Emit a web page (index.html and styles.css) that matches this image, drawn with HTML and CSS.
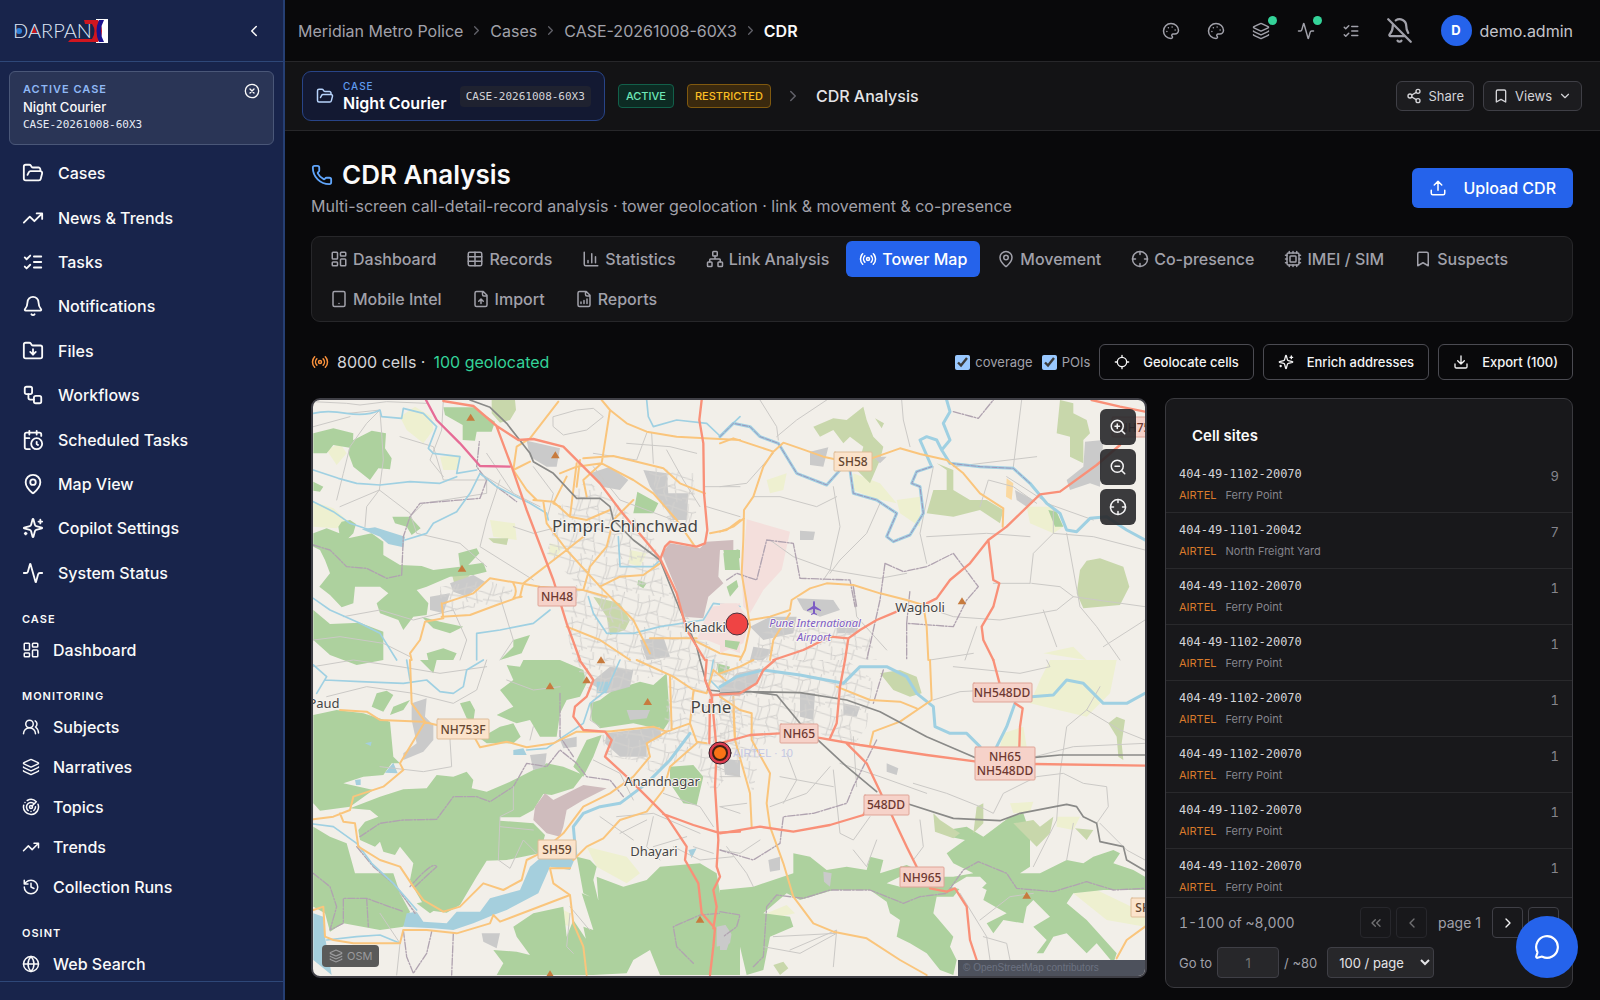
FILE: index.html
```html
<!DOCTYPE html>
<html lang="en">
<head>
<meta charset="utf-8">
<meta name="viewport" content="width=device-width, initial-scale=1">
<title>CDR Analysis</title>
<link rel="stylesheet" href="styles.css">
</head>
<body>
<svg class="sprite" aria-hidden="true">
  <symbol id="folder" viewBox="0 0 24 24"><path d="m6 14 1.5-2.9A2 2 0 0 1 9.24 10H20a2 2 0 0 1 1.94 2.5l-1.54 6a2 2 0 0 1-1.95 1.5H4a2 2 0 0 1-2-2V5a2 2 0 0 1 2-2h3.9a2 2 0 0 1 1.69.9l.81 1.2a2 2 0 0 0 1.67.9H18a2 2 0 0 1 2 2v2"/></symbol>
  <symbol id="trend" viewBox="0 0 24 24"><path d="m22 7-8.5 8.5-5-5L2 17M16 7h6v6"/></symbol>
  <symbol id="checks" viewBox="0 0 24 24"><path d="m3 17 2 2 4-4M3 7l2 2 4-4M13 6h8M13 12h8M13 18h8"/></symbol>
  <symbol id="bell" viewBox="0 0 24 24"><path d="M10.27 21a2 2 0 0 0 3.46 0M3.26 15.33A1 1 0 0 0 4 17h16a1 1 0 0 0 .74-1.67C19.41 13.96 18 12.5 18 8A6 6 0 0 0 6 8c0 4.5-1.41 5.96-2.74 7.33"/></symbol>
  <symbol id="belloff" viewBox="0 0 24 24"><path d="M10.27 21a2 2 0 0 0 3.46 0M17 17H4a1 1 0 0 1-.74-1.67C4.59 13.96 6 12.5 6 8a6 6 0 0 1 .26-1.74M2 2l20 20M8.67 3A6 6 0 0 1 18 8c0 2.69.77 4.65 1.71 6.05"/></symbol>
  <symbol id="folderdown" viewBox="0 0 24 24"><path d="M20 20a2 2 0 0 0 2-2V8a2 2 0 0 0-2-2h-7.9a2 2 0 0 1-1.69-.9L9.6 3.9A2 2 0 0 0 7.93 3H4a2 2 0 0 0-2 2v13a2 2 0 0 0 2 2ZM12 10v6M15 13l-3 3-3-3"/></symbol>
  <symbol id="flow" viewBox="0 0 24 24"><rect width="8" height="8" x="3" y="3" rx="2"/><path d="M7 11v4a2 2 0 0 0 2 2h4"/><rect width="8" height="8" x="13" y="13" rx="2"/></symbol>
  <symbol id="calclock" viewBox="0 0 24 24"><path d="M21 7.5V6a2 2 0 0 0-2-2H5a2 2 0 0 0-2 2v14a2 2 0 0 0 2 2h3.5M16 2v4M8 2v4M3 10h5M17.5 17.5 16 16.3V14"/><circle cx="16" cy="16" r="6"/></symbol>
  <symbol id="pin" viewBox="0 0 24 24"><path d="M20 10c0 5-5.54 10.19-7.4 11.8a1 1 0 0 1-1.2 0C9.54 20.19 4 15 4 10a8 8 0 0 1 16 0"/><circle cx="12" cy="10" r="3"/></symbol>
  <symbol id="sparkles" viewBox="0 0 24 24"><path d="M9.94 15.5A2 2 0 0 0 8.5 14.06l-6.14-1.58a.5.5 0 0 1 0-.96L8.5 9.94A2 2 0 0 0 9.94 8.5l1.58-6.14a.5.5 0 0 1 .96 0l1.58 6.14a2 2 0 0 0 1.44 1.44l6.14 1.58a.5.5 0 0 1 0 .96l-6.14 1.58a2 2 0 0 0-1.44 1.44l-1.58 6.14a.5.5 0 0 1-.96 0ZM20 3v4M22 5h-4M4 17v2M5 18H3"/></symbol>
  <symbol id="activity" viewBox="0 0 24 24"><path d="M22 12h-2.48a2 2 0 0 0-1.93 1.46l-2.35 8.36a.25.25 0 0 1-.48 0L9.24 2.18a.25.25 0 0 0-.48 0l-2.35 8.36A2 2 0 0 1 4.49 12H2"/></symbol>
  <symbol id="dash" viewBox="0 0 24 24"><rect width="7" height="9" x="3" y="3" rx="1"/><rect width="7" height="5" x="14" y="3" rx="1"/><rect width="7" height="9" x="14" y="12" rx="1"/><rect width="7" height="5" x="3" y="16" rx="1"/></symbol>
  <symbol id="users" viewBox="0 0 24 24"><path d="M18 21a8 8 0 0 0-16 0"/><circle cx="10" cy="8" r="5"/><path d="M22 20c0-3.37-2-6.5-4-8a5 5 0 0 0-.45-8.3"/></symbol>
  <symbol id="layers" viewBox="0 0 24 24"><path d="M12.83 2.18a2 2 0 0 0-1.66 0L2.6 6.08a1 1 0 0 0 0 1.83l8.58 3.91a2 2 0 0 0 1.66 0l8.58-3.9a1 1 0 0 0 0-1.83zM2 12a1 1 0 0 0 .58.91l8.6 3.91a2 2 0 0 0 1.65 0l8.58-3.9A1 1 0 0 0 22 12M2 17a1 1 0 0 0 .58.91l8.6 3.91a2 2 0 0 0 1.65 0l8.58-3.9A1 1 0 0 0 22 17"/></symbol>
  <symbol id="radar" viewBox="0 0 24 24"><path d="M19.07 4.93A10 10 0 0 0 6.99 3.34M4 6h.01M2.29 9.62A10 10 0 1 0 21.31 8.35M16.24 7.76A6 6 0 1 0 8.23 16.67M12 18h.01M17.99 11.66A6 6 0 0 1 15.77 16.67M13.41 10.59l5.66-5.66"/><circle cx="12" cy="12" r="2"/></symbol>
  <symbol id="history" viewBox="0 0 24 24"><path d="M3 12a9 9 0 1 0 9-9 9.75 9.75 0 0 0-6.74 2.74L3 8M3 3v5h5M12 7v5l4 2"/></symbol>
  <symbol id="globe" viewBox="0 0 24 24"><circle cx="12" cy="12" r="10"/><path d="M12 2a14.5 14.5 0 0 0 0 20 14.5 14.5 0 0 0 0-20M2 12h20"/></symbol>
  <symbol id="left" viewBox="0 0 24 24"><path d="m15 18-6-6 6-6"/></symbol>
  <symbol id="right" viewBox="0 0 24 24"><path d="m9 18 6-6-6-6"/></symbol>
  <symbol id="down" viewBox="0 0 24 24"><path d="m6 9 6 6 6-6"/></symbol>
  <symbol id="first" viewBox="0 0 24 24"><path d="m11 17-5-5 5-5M18 17l-5-5 5-5"/></symbol>
  <symbol id="last" viewBox="0 0 24 24"><path d="m6 17 5-5-5-5M13 17l5-5-5-5"/></symbol>
  <symbol id="xcircle" viewBox="0 0 24 24"><circle cx="12" cy="12" r="10"/><path d="m15 9-6 6M9 9l6 6"/></symbol>
  <symbol id="palette" viewBox="0 0 24 24"><path d="M12 22a1 1 0 0 1 0-20 10 9 0 0 1 10 9 5 5 0 0 1-5 5h-2.25a1.75 1.75 0 0 0-1.4 2.8l.3.4a1.75 1.75 0 0 1-1.4 2.8z"/><path d="M13.5 6.5h.01M17.5 10.5h.01M6.5 12.5h.01M8.5 7.5h.01"/></symbol>
  <symbol id="share" viewBox="0 0 24 24"><circle cx="18" cy="5" r="3"/><circle cx="6" cy="12" r="3"/><circle cx="18" cy="19" r="3"/><path d="m8.59 13.51 6.83 3.98M15.41 6.51l-6.82 3.98"/></symbol>
  <symbol id="bookmark" viewBox="0 0 24 24"><path d="m19 21-7-4-7 4V5a2 2 0 0 1 2-2h10a2 2 0 0 1 2 2z"/></symbol>
  <symbol id="phone" viewBox="0 0 24 24"><path d="M13.83 16.57a1 1 0 0 0 1.21-.3l.36-.47A2 2 0 0 1 17 15h3a2 2 0 0 1 2 2v3a2 2 0 0 1-2 2A18 18 0 0 1 2 4a2 2 0 0 1 2-2h3a2 2 0 0 1 2 2v3a2 2 0 0 1-.8 1.6l-.47.35a1 1 0 0 0-.29 1.23 14 14 0 0 0 6.39 6.39"/></symbol>
  <symbol id="upload" viewBox="0 0 24 24"><path d="M21 15v4a2 2 0 0 1-2 2H5a2 2 0 0 1-2-2v-4M17 8l-5-5-5 5M12 3v12"/></symbol>
  <symbol id="download" viewBox="0 0 24 24"><path d="M21 15v4a2 2 0 0 1-2 2H5a2 2 0 0 1-2-2v-4M7 10l5 5 5-5M12 15V3"/></symbol>
  <symbol id="table" viewBox="0 0 24 24"><rect width="18" height="18" x="3" y="3" rx="2"/><path d="M3 9h18M3 15h18M12 3v18"/></symbol>
  <symbol id="chart" viewBox="0 0 24 24"><path d="M3 3v16a2 2 0 0 0 2 2h16M18 17V9M13 17V5M8 17v-3"/></symbol>
  <symbol id="network" viewBox="0 0 24 24"><rect x="16" y="16" width="6" height="6" rx="1"/><rect x="2" y="16" width="6" height="6" rx="1"/><rect x="9" y="2" width="6" height="6" rx="1"/><path d="M5 16v-3a1 1 0 0 1 1-1h12a1 1 0 0 1 1 1v3M12 12V8"/></symbol>
  <symbol id="radio" viewBox="0 0 24 24"><path d="M4.9 19.1C1 15.2 1 8.8 4.9 4.9M7.8 16.2c-2.3-2.3-2.3-6.1 0-8.5M16.2 7.8c2.3 2.3 2.3 6.1 0 8.5M19.1 4.9C23 8.8 23 15.1 19.1 19"/><circle cx="12" cy="12" r="2"/></symbol>
  <symbol id="crosshair" viewBox="0 0 24 24"><circle cx="12" cy="12" r="10"/><path d="M22 12h-4M6 12H2M12 6V2M12 22v-4"/></symbol>
  <symbol id="locate" viewBox="0 0 24 24"><path d="M2 12h3M19 12h3M12 2v3M12 19v3"/><circle cx="12" cy="12" r="7"/></symbol>
  <symbol id="cpu" viewBox="0 0 24 24"><rect x="4" y="4" width="16" height="16" rx="2"/><rect x="8" y="8" width="8" height="8" rx="1"/><path d="M12 20v2M12 2v2M17 20v2M17 2v2M2 12h2M2 17h2M2 7h2M20 12h2M20 17h2M20 7h2M7 20v2M7 2v2"/></symbol>
  <symbol id="mobile" viewBox="0 0 24 24"><rect width="16" height="20" x="4" y="2" rx="2"/><path d="M12 18h.01"/></symbol>
  <symbol id="fileup" viewBox="0 0 24 24"><path d="M15 2H6a2 2 0 0 0-2 2v16a2 2 0 0 0 2 2h12a2 2 0 0 0 2-2V7ZM14 2v4a2 2 0 0 0 2 2h4M12 12v6M15 15l-3-3-3 3"/></symbol>
  <symbol id="filechart" viewBox="0 0 24 24"><path d="M15 2H6a2 2 0 0 0-2 2v16a2 2 0 0 0 2 2h12a2 2 0 0 0 2-2V7ZM14 2v4a2 2 0 0 0 2 2h4M8 18v-2M12 18v-4M16 18v-6"/></symbol>
  <symbol id="zoomin" viewBox="0 0 24 24"><circle cx="11" cy="11" r="8"/><path d="m21 21-4.35-4.35M11 8v6M8 11h6"/></symbol>
  <symbol id="zoomout" viewBox="0 0 24 24"><circle cx="11" cy="11" r="8"/><path d="m21 21-4.35-4.35M8 11h6"/></symbol>
  <symbol id="chat" viewBox="0 0 24 24"><path d="M2.99 16.34a2 2 0 0 1 .1 1.17l-1.07 3.29a1 1 0 0 0 1.24 1.17l3.41-1a2 2 0 0 1 1.1.09 10 10 0 1 0-4.78-4.72"/></symbol>
</svg>

<div class="app">
  <aside class="sidebar">
    <div class="brand">
      <svg class="logo" viewBox="0 0 97 26" role="img" aria-label="DARPAN X">
        <rect x="83" y="1" width="12" height="24" fill="#fff"/>
        <path d="M71 2h14q8 11 0 22H55q2-3 4-3h20q5-8 0-15h-7Z" fill="#d0161f"/>
        <path d="M86 2h5q-6 11 0 22h-5q-5-11 0-22Z" fill="#1b128c"/>
        <circle cx="6" cy="13" r="3" fill="#2d7fd6"/>
        <path d="m21 8 3 7h-6Z" fill="#c8141e"/>
        <text x="0" y="20" class="logo-text">DARPAN</text>
      </svg>
      <button class="plain" aria-label="Collapse sidebar"><svg class="i18"><use href="#left"/></svg></button>
    </div>
    <div class="active-case">
      <div>
        <div class="ac-label">ACTIVE CASE</div>
        <div class="ac-name">Night Courier</div>
        <div class="ac-id">CASE-20261008-60X3</div>
      </div>
      <button class="plain" aria-label="Close case"><svg class="i16"><use href="#xcircle"/></svg></button>
    </div>
    <nav class="nav-scroll">
      <div class="nav-main">
        <a href="#"><svg><use href="#folder"/></svg>Cases</a>
        <a href="#"><svg><use href="#trend"/></svg>News &amp; Trends</a>
        <a href="#"><svg><use href="#checks"/></svg>Tasks</a>
        <a href="#"><svg><use href="#bell"/></svg>Notifications</a>
        <a href="#"><svg><use href="#folderdown"/></svg>Files</a>
        <a href="#"><svg><use href="#flow"/></svg>Workflows</a>
        <a href="#"><svg><use href="#calclock"/></svg>Scheduled Tasks</a>
        <a href="#"><svg><use href="#pin"/></svg>Map View</a>
        <a href="#"><svg><use href="#sparkles"/></svg>Copilot Settings</a>
        <a href="#"><svg><use href="#activity"/></svg>System Status</a>
      </div>
      <div class="nav-group"><h2>CASE</h2>
        <a href="#"><svg><use href="#dash"/></svg>Dashboard</a>
      </div>
      <div class="nav-group"><h2>MONITORING</h2>
        <a href="#"><svg><use href="#users"/></svg>Subjects</a>
        <a href="#"><svg><use href="#layers"/></svg>Narratives</a>
        <a href="#"><svg><use href="#radar"/></svg>Topics</a>
        <a href="#"><svg><use href="#trend"/></svg>Trends</a>
        <a href="#"><svg><use href="#history"/></svg>Collection Runs</a>
      </div>
      <div class="nav-group"><h2>OSINT</h2>
        <a href="#"><svg><use href="#globe"/></svg>Web Search</a>
      </div>
    </nav>
    <div class="side-foot"></div>
  </aside>

  <div class="page">
    <header class="topbar">
      <nav class="crumbs" aria-label="Breadcrumb">
        <a href="#">Meridian Metro Police</a><svg><use href="#right"/></svg>
        <a href="#">Cases</a><svg><use href="#right"/></svg>
        <a href="#">CASE-20261008-60X3</a><svg><use href="#right"/></svg>
        <b>CDR</b>
      </nav>
      <div class="tools">
        <button class="plain tool" aria-label="Theme"><svg><use href="#palette"/></svg></button>
        <button class="plain tool" aria-label="Accent"><svg><use href="#palette"/></svg></button>
        <button class="plain tool" aria-label="Queue"><svg><use href="#layers"/></svg><span class="dot"></span></button>
        <button class="plain tool" aria-label="Health"><svg><use href="#activity"/></svg><span class="dot"></span></button>
        <button class="plain tool" aria-label="Tasks"><svg><use href="#checks"/></svg></button>
        <button class="plain mute" aria-label="Notifications off"><svg><use href="#belloff"/></svg></button>
        <button class="plain user"><span class="avatar">D</span>demo.admin</button>
      </div>
    </header>

    <div class="casebar">
      <div class="case-chip">
        <svg class="i18"><use href="#folder"/></svg>
        <div><div class="cc-label">CASE</div><div class="cc-name">Night Courier</div></div>
        <code>CASE-20261008-60X3</code>
      </div>
      <span class="badge green">ACTIVE</span>
      <span class="badge amber">RESTRICTED</span>
      <svg class="i18 sep"><use href="#right"/></svg>
      <span class="here">CDR Analysis</span>
      <div class="case-actions">
        <button class="small"><svg><use href="#share"/></svg>Share</button>
        <button class="small"><svg><use href="#bookmark"/></svg>Views<svg class="caret"><use href="#down"/></svg></button>
      </div>
    </div>

    <main>
      <div class="title-row">
        <div>
          <h1><svg><use href="#phone"/></svg>CDR Analysis</h1>
          <p>Multi-screen call-detail-record analysis · tower geolocation · link &amp; movement &amp; co-presence</p>
        </div>
        <button class="primary"><svg><use href="#upload"/></svg>Upload CDR</button>
      </div>

      <div class="tabs">
        <button><svg><use href="#dash"/></svg>Dashboard</button>
        <button><svg><use href="#table"/></svg>Records</button>
        <button><svg><use href="#chart"/></svg>Statistics</button>
        <button><svg><use href="#network"/></svg>Link Analysis</button>
        <button class="on"><svg><use href="#radio"/></svg>Tower Map</button>
        <button><svg><use href="#pin"/></svg>Movement</button>
        <button><svg><use href="#crosshair"/></svg>Co-presence</button>
        <button><svg><use href="#cpu"/></svg>IMEI / SIM</button>
        <button><svg><use href="#bookmark"/></svg>Suspects</button>
        <button><svg><use href="#mobile"/></svg>Mobile Intel</button>
        <button><svg><use href="#fileup"/></svg>Import</button>
        <button><svg><use href="#filechart"/></svg>Reports</button>
      </div>

      <div class="toolbar">
        <div class="count"><svg class="i18"><use href="#radio"/></svg><span>8000 cells ·</span><span class="geo">100 geolocated</span></div>
        <div class="acts">
          <label><input type="checkbox" checked>coverage</label>
          <label><input type="checkbox" checked>POIs</label>
          <button><svg><use href="#locate"/></svg>Geolocate cells</button>
          <button><svg><use href="#sparkles"/></svg>Enrich addresses</button>
          <button><svg><use href="#download"/></svg>Export (100)</button>
        </div>
      </div>

      <div class="split">
        <div class="map">
          <svg class="canvas" viewBox="313 400 832 576" preserveAspectRatio="xMidYMid slice">
            <defs>
              <pattern id="streets" width="110" height="96" patternUnits="userSpaceOnUse" patternTransform="rotate(8)"><path d="M0 20L35 26L70 12L110 20M0 60L28 66L62 52L110 60M20 0L24 40L12 96M52 0L58 30L52 70L66 96M88 0L82 44L96 96M35 26L28 66M0 82L54 80L110 88M62 52L82 44" /></pattern>
              <path id="peak" d="M-13 10L0 -11L13 10Z"/>
            </defs>
            <!-- terrain is drawn on a 3x grid, split in four quadrants -->
            <svg x="313" y="400" width="832" height="576" viewBox="939 1200 2496 1728">
              <g class="nw" transform="translate(900 960)">
                <path class="farm" d="M300 290L345 260L395 290L400 330L370 370L320 330ZM80 390L120 370L140 400L110 435ZM40 545L100 565L140 600L110 625L40 620ZM570 600L645 610L650 660L580 650ZM420 410L480 405L470 450L430 450ZM750 670L790 680L770 710L745 705ZM990 690L1040 700L1020 740L985 730Z"/>
                <path class="olive" d="M575 240L645 240L648 270L630 300L600 308L575 280ZM565 655L625 655L620 675L580 668ZM880 830L960 850L990 900L975 930L930 945L920 890ZM455 760L520 750L470 820Z"/>
                <path class="wood" d="M40 340L100 325L160 340L158 385L100 375L80 400L40 400ZM150 365L215 332L258 340L255 385L275 415L270 448L235 445L210 480L160 440L145 400ZM430 262L520 262L585 305L575 335L530 335L525 362L488 360L488 315L435 285ZM40 485L70 500L60 515L40 512ZM277 590L330 590L362 625L335 645L320 620L285 610ZM40 640L80 625L118 640L115 620L125 605L150 600L168 612L160 640L145 655L215 640L250 665L250 705L300 735L365 738L400 750L480 740L475 700L530 685L538 700L505 735L550 728L560 755L520 765L450 770L380 800L350 810L385 850L380 885L340 890L310 930L295 900L240 880L230 850L265 820L240 800L165 800L160 850L125 862L90 825L58 800L90 760L75 720L60 690L40 680ZM40 870L90 912L180 908L250 935L250 1020L170 1035L90 1005L40 960ZM365 890L420 905L490 920L450 940L400 925ZM640 960L690 945L665 1000L600 1020L640 980ZM380 1000L430 985L470 1000L460 1020L385 1020ZM1012 515L1075 550L1060 580L1000 580ZM1270 690L1320 690L1320 715L1275 715ZM1015 780L1040 790L1030 805L1012 795Z"/>
                <path class="town" d="M680 362L780 385L770 440L740 440L690 410ZM870 460L930 440L985 480L960 510L905 500ZM1030 450L1100 460L1105 520L1165 520L1160 600L1120 600L1050 500ZM450 790L520 765L555 785L500 830L460 815ZM390 830L450 820L430 880L390 870ZM1020 960L1090 950L1110 1010L1040 1020Z"/>
                <path class="base" d="M1085 700L1110 670L1200 685L1220 665L1300 660L1300 690L1260 690L1255 770L1270 790L1225 830L1210 895L1150 890L1130 810Z"/>
                <path class="pink" d="M1230 860L1320 850L1320 1000L1220 960L1190 960Z"/>
                <path class="lake" d="M185 628L225 622L315 650L310 682L265 672L240 650Z"/>
                <path fill="url(#streets)" class="mesh" d="M780 560L860 480L960 560L1060 640L1080 760L1140 860L1200 940L1260 1020L820 1020L790 880L820 780L740 700ZM420 800L560 780L640 810L600 850L420 880ZM1040 440L1180 460L1190 600L1120 640Z"/>
                <path class="minor" d="M40 245L140 250L180 255L260 245L380 250M145 280L240 270L200 310L150 380L130 460L110 540M240 275L245 340L250 420L238 510M238 510L330 580L350 640L480 670L560 740M238 510L200 560L195 620M238 510L120 560M300 350L400 380L430 480L560 480M430 240L425 330L390 420L430 470M540 460L640 520L720 560M560 480L560 520L370 550L330 590M600 480L560 600L540 680L700 780M40 320L150 290M130 890L240 870L340 900L460 870M40 960L120 950L250 970L330 1010M460 870L500 960L480 1020M600 830L640 960L600 1020M760 290L830 270L880 265L910 290L860 330L790 345L760 320ZM1040 340L1010 420L880 400M1055 340L1060 430M1215 500L1320 500M560 400L600 460L640 520M980 370L1110 380L1190 400M1100 390L1150 480L1200 560M700 440L760 520L740 600M880 440L960 540L1120 600M640 620L700 640L780 620M1220 560L1320 590"/>
                <path class="admin" d="M40 675L90 690L140 740L200 745L260 775L305 765L310 650L330 590L360 550L540 535L560 480L530 440L538 365M540 460L590 500L650 545"/>
                <path class="river" d="M40 280Q80 270 140 280T240 270L245 290L305 295L310 265L370 280L410 320L385 385L400 400L480 410L470 460L530 450M40 450L115 475L170 490L240 495L330 485L420 490L470 470M40 545L100 575L150 610L210 630M315 660L380 640L400 610L470 575L510 520L540 460L590 500L690 550L740 580L745 600M40 835L90 870L180 910L240 940L265 980L290 1020M530 1020L530 940L600 930L700 910L750 870M955 650L960 740L1060 740L1080 720M1040 240L1045 290L1060 320L1130 300L1220 310L1260 348L1320 290M865 830L880 880L920 940L1000 940L1080 920L1210 900L1240 850L1320 860"/>
                <path class="second" d="M775 245L690 355L650 380L640 450L680 510L710 540M905 240L930 270L980 310L1040 335L1130 350L1215 355L1320 360M930 270L905 430L830 440L780 460M850 415L940 408L1090 445L1140 490L1215 520M640 450L690 425M700 540L760 545L810 590L860 600L930 570M730 545L740 610L800 690L900 800L1000 900L1050 1000M430 850L520 820L570 775L660 790L720 800L850 810L920 830M425 890L510 885L590 855L660 830L670 790L800 690L850 650M425 850L430 895L375 905L360 960L330 1000L335 1020M850 810L870 740L920 680L940 600L1000 540M900 800L960 770L1030 765L1080 730M1230 640L1280 630L1320 600M830 430L810 590M905 430L850 480L860 530M905 430L1000 480L1060 520L1130 600L1185 680M640 790Q655 815 640 835L665 830M800 470L760 550L780 560M840 420L830 500M800 920L900 960L990 1020M1180 960L1260 1000L1320 1010M1050 955L1190 955"/>
                <path class="rail" d="M510 240L570 262L620 310L690 400L700 425L760 460L830 535L900 535L930 560L940 600L1000 660L1080 720L1140 870L1190 980L1200 1020"/>
                <path class="motor" d="M378 240L410 300L480 370L540 438L630 440"/>
                <path class="trunk" d="M430 243L520 258L590 318L655 360L700 357L790 380L900 490L960 570L1080 715L1130 820L1160 930L1215 1020M590 320L635 440L680 570L760 780L800 910L840 1020M1205 240L1198 300L1210 370L1212 520L1222 630L1215 670L1190 680L1110 665L1095 680L1080 720"/>
                <g class="peaks"><use href="#peak" x="512" y="292"/><use href="#peak" x="766" y="405"/><use href="#peak" x="486" y="745"/></g>
              </g>
              <g class="ne" transform="translate(2160 1020)">
                <path class="farm" d="M400 400L480 430L530 490L460 475L400 450ZM530 480L600 470L600 560L540 520ZM920 500L1000 500L1030 560L1000 580L930 550ZM140 420L200 400L190 450L150 460ZM970 940L1060 920L1100 960Z"/>
                <path class="olive" d="M280 260L340 235L380 240L430 200L440 240L460 290L490 320L480 360L450 430L410 390L430 320L390 290L370 310L340 270L300 290ZM465 235L492 250L485 265ZM620 520L640 450L680 450L680 390L650 370L700 390L700 450L750 480L800 480L850 510L840 550L780 510L700 530ZM1020 180L1060 190L1060 220L1100 240L1110 280L1090 300L1090 370L1050 350L1050 290L1010 280ZM1080 690L1100 662L1140 655L1210 680L1228 740L1200 795L1090 805L1070 760Z"/>
                <path class="pink" d="M80 538L210 575L185 690L130 750L90 820L70 800L65 700L75 600ZM0 790L50 790L90 840L70 910L0 940Z"/>
                <path class="wood" d="M10 640L55 628L60 690L15 690ZM20 740L50 720L55 740L30 770ZM15 900L60 905L50 930L15 920ZM985 510L1010 515L1030 560L1005 560Z"/>
                <path class="town" d="M270 335L325 322L310 380L270 375ZM460 350L500 350L480 370ZM1095 305L1150 300L1140 440L1110 430L1050 450L1040 420L1090 380ZM240 572L285 575L280 600L240 600ZM885 450L940 480L920 500L890 480ZM230 775L340 780L360 810L300 830L250 810ZM100 920L160 930L130 960L90 960ZM350 840L420 840L410 880L350 880ZM90 860L150 830L230 830L220 880L130 900Z"/>
                <path class="apricot" d="M860 415L880 430L875 480L858 470Z"/>
                <path fill="url(#streets)" class="mesh" d="M120 880L260 840L440 860L470 960L100 960Z"/>
                <path class="minor" d="M120 180L170 260L175 300M170 290L230 240L320 180M545 180L550 240L570 320M905 180L880 380M640 380L620 480L600 580L620 670M340 440L360 560L330 690L310 720M480 490L440 580L360 660L330 700M930 730L940 640L1000 580L1120 590L1275 630M935 730L1020 740L1060 770L1010 810L840 840L700 830L640 810M1040 580L1060 690L1080 800L1130 860L1200 960M1060 770L1275 800M970 810L1010 920M735 960L770 860M1150 920L1275 840M100 470L180 470L290 500L350 470M150 600L220 650L330 690L480 715L560 700M780 500L805 420L880 440L950 490M980 490L1120 540M700 380L950 350M820 730L930 730M0 440L80 430L160 340M400 740L410 830L500 930M630 960L760 940M620 590L800 580L930 590M860 410L1000 500L1000 580"/>
                <path class="admin" d="M700 215L775 235L820 180M495 670L550 695L620 680L700 640L775 740L740 780L700 860L560 850L570 750M495 670L480 780L440 960M400 740L410 800M20 720L50 700L110 720L140 600L220 610L240 715L390 720L405 800M560 850L560 960"/>
                <path class="river wide" d="M0 290L40 250L90 260L120 290L175 310L230 400L320 435L360 390M390 390L400 460L470 480L530 520L500 590L520 605L570 585L610 520L600 440L575 430L590 395L635 380L600 300L620 290L650 300L665 330L690 300L670 250L690 215L680 180M665 330L690 370L780 380L880 385L930 430L980 490L1020 520L1040 570L1070 575L1110 535L1160 530L1220 570L1275 600"/>
                <path class="border" d="M0 290L40 250L90 260L120 290L175 310L230 400L320 435L360 390M390 390L400 460L470 480L530 520L500 590L520 605L570 585L610 520L600 440L575 430L590 395L635 380M690 370L780 380L880 385L930 430"/>
                <path class="second" d="M0 310L40 295L160 335L190 308L240 325L310 350L345 358M455 355L540 325L600 342L680 360L730 400L780 460L850 505L848 560M160 335L130 380L100 470L72 510L70 600L65 700L80 790L90 860L75 930L60 960M0 575L40 560L72 535M90 840L150 830L210 810L215 780L270 745L320 730L400 735L480 760L560 780L610 795L620 860L625 960M150 960L160 900L210 820"/>
                <path class="trunk" d="M1115 180L1200 200L1275 215M1200 315L1130 375L1020 455L960 463L860 560L805 600L750 670L690 720L650 775L620 790M805 600L820 720L838 730L820 800L785 860L790 900L820 960M530 815L470 840L420 870L385 895L330 890L250 930L160 960M385 895L375 960"/>
                <g class="peaks"><use href="#peak" x="726" y="783"/></g>
              </g>
              <g class="sw" transform="translate(900 1980)">
                <path class="farm" d="M860 560L980 590L1020 640L980 670L890 620ZM640 110L690 105L700 130L660 140ZM80 160L118 160L95 230L80 225ZM690 20L740 0L740 40L700 60ZM780 745L810 760L810 800L785 790Z"/>
                <path class="wood" d="M40 165L110 150L190 160L270 185L280 290L300 310L275 310L250 345L190 350L130 370L220 390L150 440L60 452L40 430ZM150 445L240 410L310 388L380 385L410 345L460 350L500 335L520 360L515 385L560 395L620 370L660 350L740 310L790 320L850 345L820 385L755 405L730 402L700 450L660 472L600 472L600 482L700 490L735 525L720 580L620 600L560 602L530 650L480 735L440 758L380 750L350 700L330 660L340 610L300 560L285 585L250 575L240 545L225 560L180 540L175 510L195 485L235 470L210 450ZM40 500L90 530L140 550L165 640L280 640L300 700L330 755L310 800L240 810L130 790L90 815L75 760L40 740ZM600 90L640 60L620 15L660 20L670 0L780 0L850 30L860 70L840 110L800 120L780 160L770 230L720 230L690 180L650 190L590 165L640 140ZM870 130L900 120L940 90L1020 65L1060 75L1100 40L1110 180L1090 210L1000 190L900 205L875 180ZM540 235L600 200L640 190L662 230L640 250L560 250ZM480 130L510 122L525 150L520 185L500 175ZM230 100L260 92L280 105L250 155L215 140ZM280 140L330 120L310 150L270 165ZM360 0L410 0L400 40ZM860 240L905 225L880 290L850 350L820 320ZM1110 320L1180 315L1210 350L1190 435L1150 430L1110 370ZM640 800L700 760L790 740L800 830L820 780L860 840L880 945L590 945L610 910L580 870L650 875L690 885L650 830ZM890 650L970 680L1040 660L1080 620L1200 610L1250 640L1260 700L1320 690L1320 945L1080 945L1050 870L1000 900L980 940L880 945L850 800L880 810L845 700L895 720ZM830 590L870 600L890 620L880 660L895 722L850 700ZM350 730L400 720L420 740L390 760ZM1250 10L1290 20L1280 45L1255 40Z"/>
                <path class="town" d="M335 130L380 115L375 170L400 195L400 240L370 275L310 300L310 280L350 250L335 180ZM920 220L1080 200L1085 230L1040 250L1040 290L960 290L915 250ZM690 285L740 280L735 320L700 330ZM545 820L600 820L590 865L550 845ZM780 240L830 230L830 260L790 265ZM870 70L930 20L1000 30L990 80L920 100ZM1250 800L1300 790L1290 850L1250 860ZM1270 300L1320 300L1320 350L1280 345ZM980 150L1050 150L1040 175L990 180Z"/>
                <path class="base" d="M735 400L760 420L850 375L920 385L850 420L800 450L790 500L780 530L740 520L700 480L705 440Z"/>
                <path class="lake" d="M320 760L350 755L370 785L440 790L470 755L540 755L570 715L660 690L690 620L720 595L825 595L810 630L750 620L715 700L620 750L580 765L520 790L460 810L400 805L310 800ZM40 760L70 770L75 830L95 945L40 900ZM255 338L280 308L293 340ZM640 270L670 265L680 285L640 285ZM890 65L925 65L920 100L890 100ZM1165 570L1190 565L1175 595ZM165 360L182 358L182 375L168 375ZM195 250L215 245L212 258Z"/>
                <path fill="url(#streets)" class="mesh" d="M820 0L1260 0L1320 40L1320 300L1240 400L1180 300L1110 310L1060 340L1000 300L920 290L900 210L1090 210L1110 40L1020 60L880 120Z"/>
                <path class="minor" d="M40 20L160 0L300 20L420 40L560 20M80 110L200 80L340 100L460 130L530 90L560 0M465 180L450 240L455 320L370 335L240 320M620 60L700 90L780 80M880 120L870 180L900 200M700 200L690 240M950 470L1060 460L1200 520M1040 480L960 520M1060 560L1160 530M880 300L960 340L1000 420M1250 320L1320 350M810 740L860 800L870 810M240 760L300 850L290 945M1120 560L1200 600L1300 590M300 700L350 760M810 760L800 860L820 880M600 500L700 510M1090 400L1200 440L1240 500M1260 440L1320 460M1180 560L1240 580M1060 470L1040 560L1080 600M900 470L1000 540"/>
                <path class="admin" d="M180 530L240 490L310 480L410 478L460 410L530 410L570 425L640 380L680 310L740 320L780 270L830 310L860 350L930 360L970 410M40 640L90 680L110 740L90 810L130 790L130 715L200 715L310 755M200 715L205 800M310 810L320 890L340 940L380 880L395 815M460 820L455 945M780 100L780 230L820 290M1320 730L1260 760L1200 765L1120 800L1130 860L1180 910M170 560L220 620L290 680L345 760M345 680L410 620Q400 600 330 680"/>
                <path class="minor" d="M640 380L640 450L600 470L595 600L630 625L670 540L710 580"/>
                <path class="river" d="M75 60L180 65L310 70L380 60L420 95L460 100L490 80L500 30L550 0M40 15L80 50L50 100M320 0L330 60M680 270L740 265L790 230L850 190L870 130L920 90L960 0M40 492L100 500L170 550L215 610L280 670L350 750M80 840L170 830L240 825L300 850M1320 40L1260 90L1230 60L1240 0"/>
                <path class="river wide" d="M828 590L820 500L850 460L900 440L960 430L1040 370L1110 300L1170 220"/>
                <path class="second" d="M330 0L335 130L375 185L300 310L310 330L250 380L160 410L150 450L100 470L40 478M120 150L200 155L240 180L370 185L410 195M525 235L540 262L620 245L680 262L760 250L830 215L920 215L1060 200L1100 215L1170 190M120 460L130 485L165 490L175 560L240 600L300 620L340 680L370 720L430 755L480 740L550 670L610 690L665 660L680 600L720 580L790 520L850 440L930 400L1000 350L1050 290L1040 250L1100 215M820 600L860 560L910 535L960 480L1040 455L1090 390L1110 320L1190 250M810 625L750 625L760 670L810 705L600 785L580 765L570 790L470 820L380 810L310 810L300 850L160 850L100 840L75 830L70 740L40 750M810 705L820 790L850 860L860 945M1010 0L1120 50L1180 90L1220 100L1240 30L1300 80M1180 95L1170 190L1190 245L1220 250M1110 50L1115 210M1300 110L1305 240"/>
                <path class="rail" d="M1200 0L1225 90L1320 100"/>
                <path class="trunk" d="M838 0L860 30L880 60L860 110L825 140L820 170L850 210L915 215L935 240L915 290L980 350L1100 470L1160 560L1155 600L1195 670L1205 760L1245 805L1240 860L1230 945M1220 0L1215 60L1235 110L1250 270L1245 380L1255 540L1250 620L1260 650L1240 690L1250 740L1240 805M1090 462L1180 495L1255 518L1320 515M1320 103L1235 105L1215 60M1230 120L1228 250"/>
                <g class="peaks"><use href="#peak" x="750" y="78"/><use href="#peak" x="860" y="60"/><use href="#peak" x="903" y="0"/><use href="#peak" x="1043" y="125"/><use href="#peak" x="1200" y="778"/><use href="#peak" x="750" y="942"/></g>
              </g>
              <g class="se" transform="translate(2160 1980)">
                <path class="farm" d="M990 0L1190 0L1170 100L1100 170L930 130L960 60ZM850 220L910 200L920 260L840 260ZM1060 700L1130 690L1275 760L1275 800L1160 780ZM870 430L940 425L930 455L880 460ZM1010 470L1080 470L1060 510L1010 500ZM140 760L200 735L225 760L160 775Z"/>
                <path class="wood" d="M0 690L100 680L220 640L220 580L270 590L320 630L380 620L440 630L450 590L490 600L480 640L560 615L640 650L700 650L760 640L700 610L680 580L735 540L690 530L680 510L740 500L790 530L830 500L870 470L910 460L930 520L930 620L900 640L960 640L1040 600L1090 610L1120 590L1180 570L1200 580L1180 610L1240 630L1275 650L1275 690L1150 690L1060 700L1040 730L1100 780L1190 880L1180 910L1130 850L1100 880L1040 820L1000 830L970 880L950 880L980 840L940 800L990 770L940 720L920 740L910 790L850 780L820 820L800 790L860 760L790 720L800 690L740 660L700 710L650 710L640 760L700 830L690 860L710 900L700 945L660 930L620 880L570 850L530 830L540 780L510 760L500 725L450 690L340 690L240 720L200 700L130 760L210 770L220 800L150 830L130 930L80 945L60 860L0 770Z"/>
                <path class="land" d="M590 650L540 680L500 670L540 650ZM690 680L740 650L780 650L800 670L770 700Z"/>
                <path class="olive" d="M640 460L660 480L720 520L700 535L645 515ZM770 440L790 430L790 490L760 520ZM880 490L940 480L960 500L1000 470L990 520L950 560L930 540ZM480 40L540 30L590 50L605 100L570 110L520 90ZM1165 190L1190 170L1215 180L1205 250L1210 300L1195 290L1190 230ZM160 915L190 905L205 925L180 945ZM1065 505L1120 510L1100 540Z"/>
                <path class="town" d="M0 90L50 40L120 25L110 70L70 105L0 110ZM240 100L285 100L280 180L240 170ZM500 310L535 325L530 345L500 335ZM145 600L180 590L180 630L150 635ZM10 300L45 300L45 335L15 345ZM370 130L420 140L410 170L370 165ZM310 635L335 640L330 680L312 665ZM0 830L30 840L20 870L0 870Z"/>
                <path fill="url(#streets)" class="mesh" d="M0 0L380 0L460 60L440 200L400 260L340 240L240 190L120 260L100 400L60 300L0 240Z"/>
                <path class="minor" d="M640 120L720 95L810 90M980 0L990 20L900 40L700 20M580 370L680 400L780 440L820 460L850 400L950 350L1030 340L1090 370L1160 380L1165 440L1130 490M1140 80L1100 150L1040 200L1020 340L1010 480L940 620M1100 150L1200 210L1275 240M945 290L1060 260L1275 250M340 330L360 520L400 540L450 470M400 570L440 620L470 540M600 480L610 560L580 600M780 780L870 710L940 700M720 700L800 830L810 900M790 830L860 850L870 900M210 870L350 810L340 920M160 830L350 820L240 880L130 860M1140 490L1220 570L1275 600M1060 490L1040 600M360 310L480 350L620 400M20 560L80 640L100 680M0 570L60 580L120 540M400 230L410 380M180 350L340 380M150 440L260 400L330 320M200 280L230 360L190 430M0 350L60 350M0 440L80 430"/>
                <path class="admin" d="M100 920L130 890L140 740L170 705L250 715L330 690L450 690L550 730L600 710L680 700L730 630L775 605L860 640L890 685L1000 695L1100 665L1180 690L1275 685M490 30L460 130M470 240L400 380L380 430L280 460L190 470L180 550L100 600L0 570M0 755L60 765L50 800L10 830"/>
                <path class="river wide" d="M0 80L50 50L130 30L240 45L370 70L420 20L500 20L560 50L590 100L640 140L645 200L690 220L740 220L780 260M830 260L860 200L885 130M935 110L1000 105L1040 60L1090 70L1150 130L1220 130L1275 100"/>
                <path class="second" d="M0 40L60 20L100 0M350 80L450 120L540 125L590 145M630 0L635 120L540 185L460 215L450 255M40 150L45 240L90 400L95 500M0 110L60 150L95 160L95 240L150 340L140 430L150 500L190 610L220 710L280 790L340 815L440 835L540 900L620 945M1275 800L1220 840L1190 895"/>
                <path class="rail" d="M0 100L90 95L170 105L240 190L380 320L470 395M90 95L240 98L380 120L480 155L620 230L770 295M945 292L1020 285L1275 285M565 432L700 475L840 482L900 460L1040 433L1070 440L1090 470L1130 490L1140 545L1210 560L1220 600L1275 632"/>
                <path class="trunk" d="M165 0L130 30L110 70L60 100L0 103M375 0L360 80L350 190L330 235M0 250L90 225L180 220M290 232L420 255L620 285L770 305M940 312L1275 317M380 250L440 310L485 405M515 465L560 560L590 620M630 685L680 695L705 685L740 740L750 840L770 900M0 520L120 500L220 515L330 495L430 465L435 455M820 0L838 68M885 130L908 145L900 200L898 262"/>
                <g class="peaks"><use href="#peak" x="920" y="706"/></g>
              </g>
            </svg>

            <g class="shield red">
              <rect x="538" y="587" width="38" height="19" rx="1"/><text x="557" y="601">NH48</text>
              <rect x="780" y="724" width="38" height="19" rx="1"/><text x="799" y="738">NH65</text>
              <rect x="973" y="683" width="59" height="19" rx="1"/><text x="1002" y="697">NH548DD</text>
              <rect x="975" y="747" width="60" height="33" rx="1"/><text x="1005" y="761">NH65</text><text x="1005" y="775">NH548DD</text>
              <rect x="864" y="795" width="45" height="20" rx="1"/><text x="886" y="809">548DD</text>
              <rect x="900" y="867" width="44" height="20" rx="1"/><text x="922" y="882">NH965</text>
              <rect x="1112" y="417" width="50" height="20" rx="1"/><text x="1141" y="432">NH753F</text>
            </g>
            <g class="shield tan">
              <rect x="834" y="452" width="38" height="19" rx="1"/><text x="853" y="466">SH58</text>
              <rect x="437" y="719" width="52" height="20" rx="1"/><text x="463" y="734">NH753F</text>
              <rect x="538" y="840" width="38" height="19" rx="1"/><text x="557" y="854">SH59</text>
              <rect x="1131" y="898" width="38" height="19" rx="1"/><text x="1150" y="912">SH60</text>
            </g>
            <g class="place">
              <text class="city" x="625" y="532">Pimpri-Chinchwad</text>
              <text class="city" x="711" y="713">Pune</text>
              <text x="705" y="632">Khadki</text>
              <text x="920" y="612">Wagholi</text>
              <text x="324" y="708">Paud</text>
              <text x="662" y="786">Anandnagar</text>
              <text x="654" y="856">Dhayari</text>
              <text class="air" x="815" y="627">Pune International</text>
              <text class="air" x="814" y="641">Airport</text>
            </g>
            <path fill="#7d5cc4" d="M814 601q1 0 1 2v3l6 4v1l-6-2v4l2 1v1l-3-1-3 1v-1l2-1v-4l-6 2v-1l6-4v-3q0-2 1-2Z"/>
            <text class="tag" x="733" y="757">AIRTEL · 10</text>
            <circle cx="737" cy="624" r="11" fill="#ef4444" stroke="#4b3440" stroke-width="1"/>
            <circle cx="720" cy="753" r="11" fill="#dd3b4e" stroke="#33202c" stroke-width="1"/>
            <circle cx="720" cy="753" r="7" fill="#f97316" stroke="#3d1f12" stroke-width="2"/>
          </svg>
          <div class="zoom">
            <button aria-label="Zoom in"><svg><use href="#zoomin"/></svg></button>
            <button aria-label="Zoom out"><svg><use href="#zoomout"/></svg></button>
            <button aria-label="Recenter"><svg><use href="#crosshair"/></svg></button>
          </div>
          <button class="layer"><svg><use href="#layers"/></svg>OSM</button>
          <div class="credit">© OpenStreetMap contributors</div>
        </div>

        <section class="panel">
          <h3>Cell sites</h3>
          <ul class="sites">
            <li><div><code>404-49-1102-20070</code><p><b>AIRTEL</b>Ferry Point</p></div><span>9</span></li>
            <li><div><code>404-49-1101-20042</code><p><b>AIRTEL</b>North Freight Yard</p></div><span>7</span></li>
            <li><div><code>404-49-1102-20070</code><p><b>AIRTEL</b>Ferry Point</p></div><span>1</span></li>
            <li><div><code>404-49-1102-20070</code><p><b>AIRTEL</b>Ferry Point</p></div><span>1</span></li>
            <li><div><code>404-49-1102-20070</code><p><b>AIRTEL</b>Ferry Point</p></div><span>1</span></li>
            <li><div><code>404-49-1102-20070</code><p><b>AIRTEL</b>Ferry Point</p></div><span>1</span></li>
            <li><div><code>404-49-1102-20070</code><p><b>AIRTEL</b>Ferry Point</p></div><span>1</span></li>
            <li><div><code>404-49-1102-20070</code><p><b>AIRTEL</b>Ferry Point</p></div><span>1</span></li>
          </ul>
          <div class="pager">
            <div class="row">
              <span class="range">1-100 of ~8,000</span>
              <button disabled aria-label="First page"><svg><use href="#first"/></svg></button>
              <button disabled aria-label="Previous page"><svg><use href="#left"/></svg></button>
              <span class="pg">page 1</span>
              <button aria-label="Next page"><svg><use href="#right"/></svg></button>
              <button aria-label="Last page"><svg><use href="#last"/></svg></button>
            </div>
            <div class="row">
              <label for="goto">Go to</label>
              <input id="goto" type="text" placeholder="1">
              <span>/ ~80</span>
              <select aria-label="Rows per page"><option>100 / page</option></select>
            </div>
          </div>
        </section>
      </div>
    </main>
  </div>
</div>
<button class="chat" aria-label="Open chat"><svg><use href="#chat"/></svg></button>
</body>
</html>
```
FILE: styles.css
```css
* { box-sizing: border-box; margin: 0; padding: 0; }
:root { color-scheme: dark; }
body {
  background: #09090b; color: #fafafa; overflow: hidden;
  font: 400 16px/24px Inter, "Liberation Sans", sans-serif;
}
button, input, select { font: inherit; color: inherit; }
button { cursor: pointer; }
a { color: inherit; text-decoration: none; }
ul { list-style: none; }
code { font-family: "DejaVu Sans Mono", monospace; }
svg { fill: none; stroke: currentColor; stroke-width: 2; stroke-linecap: round; stroke-linejoin: round; flex: none; display: block; }
.sprite { position: absolute; width: 0; height: 0; }
.i16 { width: 16px; height: 16px; }
.i18 { width: 18px; height: 18px; }
.plain { background: none; border: 0; display: flex; align-items: center; }

.app { display: flex; height: 100vh; }

/* sidebar */
.sidebar { width: 285px; flex: none; background: #18244b; border-right: 2px solid #263f73; display: flex; flex-direction: column; }
.brand { height: 62px; flex: none; border-bottom: 1px solid #2e4778; display: flex; align-items: center; justify-content: space-between; padding: 0 20px 0 13px; }
.logo { width: 97px; height: 26px; stroke: none; }
.logo-text { font: 300 20px Lato, sans-serif; fill: #dfe8f8; }
.active-case { margin: 9px 9px 6px; height: 74px; flex: none; border: 1px solid #4a5778; border-radius: 6px; background: #2a3556; padding: 8px 13px 0 13px; display: flex; justify-content: space-between; align-items: flex-start; }
.active-case button { margin-top: 3px; }
.ac-label { font-size: 11px; line-height: 18px; font-weight: 600; letter-spacing: 1px; color: #8fb8f5; }
.ac-name { font-size: 13px; line-height: 19px; font-weight: 500; }
.ac-id { font: 11px/16px "DejaVu Sans Mono", monospace; color: #e6ebf5; }
.nav-scroll { flex: 1; min-height: 0; overflow: hidden; font-weight: 500; }
.nav-main { display: flex; flex-direction: column; height: 444px; }
.nav-main a { flex: 1; display: flex; align-items: center; gap: 14px; padding-left: 22px; }
.nav-main svg { width: 22px; height: 22px; }
.nav-group + .nav-group { margin-top: 2px; }
.nav-group h2 { font-size: 11px; line-height: 16px; font-weight: 600; letter-spacing: 1px; padding: 16px 22px 3px; }
.nav-group a { height: 40px; display: flex; align-items: center; gap: 13px; padding-left: 22px; }
.nav-group svg { width: 18px; height: 18px; }
.side-foot { height: 19px; flex: none; border-top: 1px solid #2e4778; }

/* top bars */
.page { flex: 1; min-width: 0; }
.topbar { height: 62px; border-bottom: 1px solid #27272a; display: flex; align-items: center; justify-content: space-between; padding: 0 27px 0 13px; color: #a1a1aa; }
.crumbs { display: flex; align-items: center; gap: 6px; }
.crumbs svg { width: 15px; height: 15px; color: #62626a; }
.crumbs b { font-weight: 600; color: #fafafa; }
.tools { display: flex; align-items: center; }
.tool { position: relative; width: 45px; justify-content: center; }
.tool svg { width: 18px; height: 18px; stroke-width: 2; }
.dot { position: absolute; right: 7px; top: -6px; width: 9px; height: 9px; border-radius: 50%; background: #34d399; }
.mute { width: 52px; justify-content: center; }
.mute svg { width: 27px; height: 27px; }
.user { gap: 8px; margin-left: 15px; color: #c4c4cb; }
.avatar { width: 31px; height: 31px; border-radius: 50%; background: #2563eb; color: #fff; font-size: 13px; line-height: 31px; font-weight: 700; text-align: center; }
.casebar { height: 69px; background: #131315; border-bottom: 1px solid #27272a; display: flex; align-items: center; padding: 0 18px 0 17px; }
.case-chip { height: 50px; border: 1px solid #284487; border-radius: 9px; background: #131932; display: flex; align-items: center; padding: 0 13px; gap: 9px; color: #b8d4fc; margin-right: 13px; }
.case-chip code { font-size: 11px; line-height: 21px; padding: 0 6px; border-radius: 4px; background: #1f2230; color: #d4d4d8; margin-left: 4px; }
.cc-label { font-size: 10px; line-height: 13px; font-weight: 500; letter-spacing: 1px; color: #5f9cf0; }
.cc-name { line-height: 20px; font-weight: 600; color: #fff; }
.badge { font-size: 11px; line-height: 22px; font-weight: 500; border: 1px solid; border-radius: 4px; padding: 0 7px; margin-right: 13px; }
.green { color: #6ee7b7; background: #0c2b23; border-color: #12604a; }
.amber { color: #fbbf24; background: #3a290e; border-color: #80590f; }
.sep { color: #62626a; margin-right: 14px; }
.here { font-weight: 500; color: #e4e4e7; }
.case-actions { margin-left: auto; display: flex; gap: 9px; }
.small { height: 30px; display: flex; align-items: center; gap: 6px; padding: 0 9px; border: 1px solid #3f3f46; border-radius: 6px; background: #1c1c1f; color: #d4d4d8; font-size: 13px; }
.small svg { width: 16px; height: 16px; }
.small .caret { width: 14px; height: 14px; }

/* page content */
main { padding: 26px 27px 0 26px; }
.title-row { display: flex; align-items: center; justify-content: space-between; }
h1 { font-size: 26px; line-height: 36px; font-weight: 600; display: flex; align-items: center; gap: 9px; }
h1 svg { width: 22px; height: 22px; color: #60a5fa; }
.title-row p { line-height: 26px; color: #a1a1aa; }
.primary { height: 40px; border: 0; border-radius: 6px; background: #2563eb; color: #fff; font-weight: 500; display: flex; align-items: center; gap: 17px; padding: 0 17px; }
.primary svg { width: 18px; height: 18px; }
.tabs { margin-top: 17px; border: 1px solid #27272a; border-radius: 9px; background: #141416; padding: 4px 5px; display: flex; flex-wrap: wrap; gap: 4px; }
.tabs button { height: 36px; display: flex; align-items: center; gap: 5px; padding: 0 13px; border: 0; border-radius: 6px; background: none; color: #a1a1aa; font-weight: 500; }
.tabs svg { width: 18px; height: 18px; }
.tabs .on { background: #2563eb; color: #fff; }
.toolbar { margin: 22px 0 18px; display: flex; justify-content: space-between; align-items: center; }
.count { display: flex; align-items: center; gap: 8px; color: #d4d4d8; }
.count svg { color: #fb923c; }
.geo { color: #34d399; }
.acts { display: flex; align-items: center; gap: 9px; font-size: 13px; color: #a1a1aa; }
.acts label { display: flex; align-items: center; gap: 5px; }
.acts input { width: 15px; height: 15px; }
.acts button { height: 36px; display: flex; align-items: center; gap: 13px; padding: 0 14px; border: 1px solid #4b4b52; border-radius: 6px; background: none; color: #f4f4f5; font-weight: 500; font-size: 13px; }
.acts svg { width: 16px; height: 16px; }
.split { display: grid; grid-template-columns: minmax(0, 1fr) 408px; gap: 18px; align-items: start; }

/* map */
.map { position: relative; height: 58vh; border: 2px solid #3f3f46; border-radius: 9px; overflow: hidden; background: #f2efe9; }
.canvas { width: 100%; height: 100%; stroke: none; }
.canvas svg { stroke: none; }
.wood { fill: #add19e; }
.olive { fill: #c8d7ab; }
.farm { fill: #eef0d0; }
.land { fill: #f2efe9; }
.town { fill: #cacaca; }
.base { fill: #cfbcbd; }
.pink { fill: #f4dfdc; }
.apricot { fill: #fbd9a0; }
.lake { fill: #a5cfdd; }
#streets path { stroke: #d3d1ce; stroke-width: 3; }
.canvas .minor { stroke: #cbc9c6; stroke-width: 3; }
.canvas .admin { stroke: #b0a3b0; stroke-width: 4; stroke-dasharray: 22 5 5 5; }
.canvas .border { stroke: #9c94bb; stroke-width: 3; stroke-dasharray: 16 5; }
.canvas .river { stroke: #9fd0e2; stroke-width: 5; }
.canvas .wide { stroke-width: 9; }
.canvas .second { stroke: #fac57c; stroke-width: 6; }
.canvas .rail { stroke: #8a8a88; stroke-width: 5; }
.canvas .motor { stroke: #e66c96; stroke-width: 7; }
.canvas .trunk { stroke: #f99078; stroke-width: 7; }
.peaks { fill: #c77b3e; }
.shield { font: 500 12px "Noto Sans", sans-serif; text-anchor: middle; stroke-width: 1; }
.shield text { stroke: none; }
.red rect { fill: #f6d2c9; stroke: #dfa497; }
.red text { fill: #6d3831; }
.tan rect { fill: #fbe3cb; stroke: #dfbd98; }
.tan text { fill: #654630; }
.place { font: 13px "Noto Sans", sans-serif; text-anchor: middle; fill: #454545; stroke: #f7f4ef; stroke-width: 2; paint-order: stroke; }
.place .city { font-size: 17px; }
.place .air { font-size: 11px; font-style: italic; fill: #7d5cc4; }
.tag { font: 11px "Liberation Sans", sans-serif; fill: #c5c8e4; }
.zoom { position: absolute; top: 9px; right: 9px; display: grid; gap: 4px; }
.zoom button { width: 36px; height: 36px; border: 0; border-radius: 6px; background: rgba(39, 39, 42, .9); color: #f4f4f5; display: grid; place-items: center; }
.zoom svg { width: 18px; height: 18px; }
.layer { position: absolute; left: 9px; bottom: 9px; height: 22px; display: flex; align-items: center; gap: 4px; padding: 0 7px; border: 0; border-radius: 4px; background: #5a5a59; color: #9b9b9d; font-size: 11px; }
.layer svg { width: 14px; height: 14px; }
.credit { position: absolute; right: 0; bottom: 0; width: 187px; padding-left: 5px; background: #4d515c; color: #6c7281; font: 10px/16px "Liberation Sans", sans-serif; }

/* cell list */
.panel { border: 1px solid #3a3a3f; border-radius: 9px; background: #18181b; overflow: hidden; }
.panel h3 { font-size: 15px; line-height: 24px; font-weight: 600; padding: 25px 26px 9px; }
.sites { height: 44vh; overflow: hidden; }
.sites li { height: 56px; display: flex; justify-content: space-between; padding: 7px 13px 0; border-bottom: 1px solid #29292c; }
.sites li span { font-size: 13px; line-height: 24px; font-variant-numeric: tabular-nums; color: #85858d; }
.sites code { display: block; font-size: 12px; line-height: 20px; color: #d4d4d8; }
.sites p { font-size: 11px; line-height: 22px; color: #85858d; }
.sites b { font-weight: 400; color: #d97a2b; margin-right: 9px; }
.pager { border-top: 1px solid #2e2e32; padding: 9px 13px; display: grid; gap: 9px; font-size: 14px; color: #a1a1aa; }
.row { display: flex; align-items: center; gap: 5px; }
.range { margin-right: auto; font-variant-numeric: tabular-nums; }
.pager button { width: 31px; height: 31px; border: 1px solid #3f3f46; border-radius: 4px; background: none; color: #f4f4f5; display: grid; place-items: center; }
.pager button:disabled { opacity: .4; }
.pager svg { width: 16px; height: 16px; }
.pg { padding: 0 6px; }
.pager label, .pager label ~ * { font-size: 13px; }
.pager input { width: 62px; height: 31px; border: 1px solid #3f3f46; border-radius: 4px; background: #27272a; text-align: center; }
.pager select { width: 107px; height: 31px; margin-left: 5px; padding-left: 7px; border: 1px solid #3f3f46; border-radius: 4px; background: #27272a; color: #e4e4e7; }
.chat { position: fixed; right: 22px; bottom: 22px; width: 62px; height: 62px; border: 0; border-radius: 50%; background: #2563eb; color: #fff; display: grid; place-items: center; }
.chat svg { width: 26px; height: 26px; }
```
